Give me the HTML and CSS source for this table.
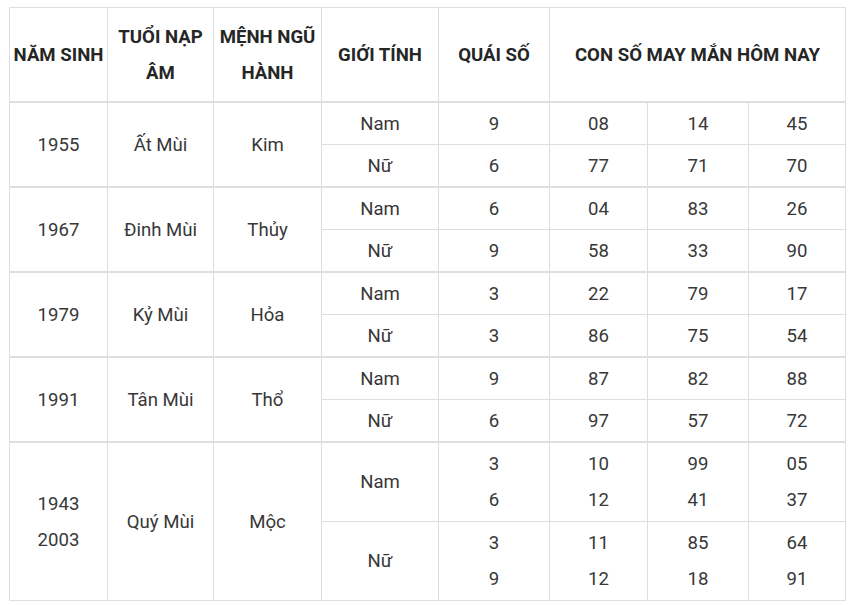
FILE: index.html
```html
<!DOCTYPE html>
<html lang="vi">
<head>
<meta charset="utf-8">
<link rel="stylesheet" href="styles.css">
</head>
<body>
<div class="wrap">
<table class="lucky">
  <colgroup>
    <col class="c1"><col class="c2"><col class="c3"><col class="c4"><col class="c5"><col class="c6"><col class="c7"><col class="c8">
  </colgroup>
  <thead>
    <tr class="head">
      <th>NĂM SINH</th>
      <th>TUỔI NẠP ÂM</th>
      <th>MỆNH NGŨ HÀNH</th>
      <th>GIỚI TÍNH</th>
      <th>QUÁI SỐ</th>
      <th colspan="3">CON SỐ MAY MẮN HÔM NAY</th>
    </tr>
  </thead>
  <tbody>
    <tr class="grp">
      <td rowspan="2">1955</td><td rowspan="2">Ất Mùi</td><td rowspan="2">Kim</td>
      <td>Nam</td><td>9</td><td>08</td><td>14</td><td>45</td>
    </tr>
    <tr class="sub">
      <td>Nữ</td><td>6</td><td>77</td><td>71</td><td>70</td>
    </tr>
    <tr class="grp">
      <td rowspan="2">1967</td><td rowspan="2">Đinh Mùi</td><td rowspan="2">Thủy</td>
      <td>Nam</td><td>6</td><td>04</td><td>83</td><td>26</td>
    </tr>
    <tr class="sub">
      <td>Nữ</td><td>9</td><td>58</td><td>33</td><td>90</td>
    </tr>
    <tr class="grp">
      <td rowspan="2">1979</td><td rowspan="2">Kỷ Mùi</td><td rowspan="2">Hỏa</td>
      <td>Nam</td><td>3</td><td>22</td><td>79</td><td>17</td>
    </tr>
    <tr class="sub">
      <td>Nữ</td><td>3</td><td>86</td><td>75</td><td>54</td>
    </tr>
    <tr class="grp">
      <td rowspan="2">1991</td><td rowspan="2">Tân Mùi</td><td rowspan="2">Thổ</td>
      <td>Nam</td><td>9</td><td>87</td><td>82</td><td>88</td>
    </tr>
    <tr class="sub">
      <td>Nữ</td><td>6</td><td>97</td><td>57</td><td>72</td>
    </tr>
    <tr class="grp tall">
      <td rowspan="2">1943<br>2003</td><td rowspan="2">Quý Mùi</td><td rowspan="2">Mộc</td>
      <td>Nam</td><td>3<br>6</td><td>10<br>12</td><td>99<br>41</td><td>05<br>37</td>
    </tr>
    <tr class="sub tall">
      <td>Nữ</td><td>3<br>9</td><td>11<br>12</td><td>85<br>18</td><td>64<br>91</td>
    </tr>
  </tbody>
</table>
</div>
</body>
</html>
```

FILE: styles.css
```css
html, body {
  margin: 0;
  padding: 0;
  background: #ffffff;
}

.wrap {
  padding: 7px 0 0 9px;
}

.lucky {
  border-collapse: collapse;
  table-layout: fixed;
  width: 836px;
  font-family: Roboto, "Liberation Sans", Arial, sans-serif;
  font-size: 18.6px;
  color: #383838;
}

.c1 { width: 98px; }
.c2 { width: 106px; }
.c3 { width: 108px; }
.c4 { width: 117px; }
.c5 { width: 111px; }
.c6 { width: 98px; }
.c7 { width: 101px; }
.c8 { width: 97px; }

.lucky th,
.lucky td {
  border: 1px solid #dedede;
  text-align: center;
  vertical-align: middle;
  padding: 0 3px;
  line-height: 36px;
}

.lucky th {
  font-weight: 700;
  color: #262626;
  height: 93px;
  border-bottom: 2px solid #dedede;
}

.lucky tr.grp td {
  height: 41px;
  border-top: 2px solid #dedede;
}

.lucky tr.sub td {
  height: 41px;
  border-top: 1px solid #e6e6e6;
}

.lucky tr.tall td {
  height: 78px;
}
```
